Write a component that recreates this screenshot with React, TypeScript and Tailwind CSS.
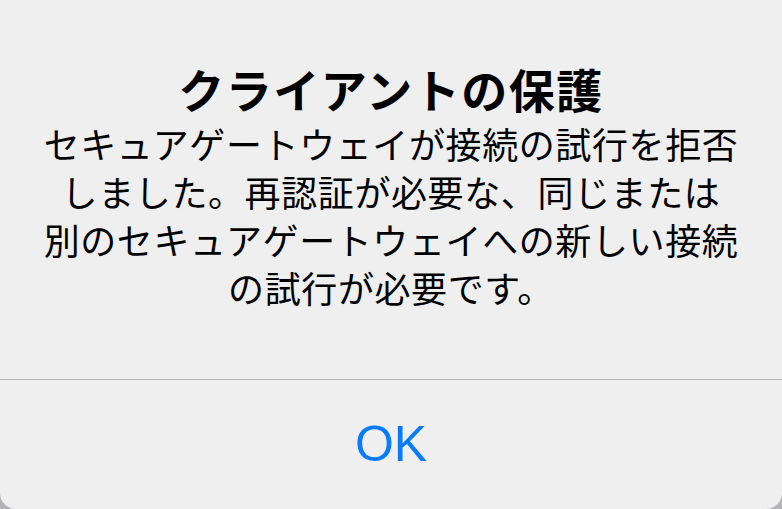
export default function App() {
  return (
    <div className="w-[782px] h-[509px] bg-[#b4b4b6] overflow-hidden">
      <div
        className="w-full h-full bg-[#efeff0] rounded-b-[16px] flex flex-col"
        style={{ fontFamily: '"Noto Sans CJK JP", "Noto Sans", sans-serif' }}
      >
        <div className="flex-1 flex flex-col items-center pt-[57px] px-[30px]">
          <h1 className="text-[46px] leading-[62px] font-bold text-black tracking-[1.5px]">
            クライアントの保護
          </h1>
          <p className="text-[36px] leading-[48px] text-black text-center tracking-[0.6px] whitespace-nowrap">
            セキュアゲートウェイが接続の試行を拒否
            <br />
            しました。再認証が必要な、同じまたは
            <br />
            別のセキュアゲートウェイへの新しい接続
            <br />
            の試行が必要です。
          </p>
        </div>
        <div className="h-px bg-[#b9b9bd]" />
        <button
          className="h-[129px] flex items-center justify-center text-[50px] text-[#0a7aff]"
          style={{ fontFamily: '"Liberation Sans", Arial, sans-serif' }}
        >
          OK
        </button>
      </div>
    </div>
  );
}
